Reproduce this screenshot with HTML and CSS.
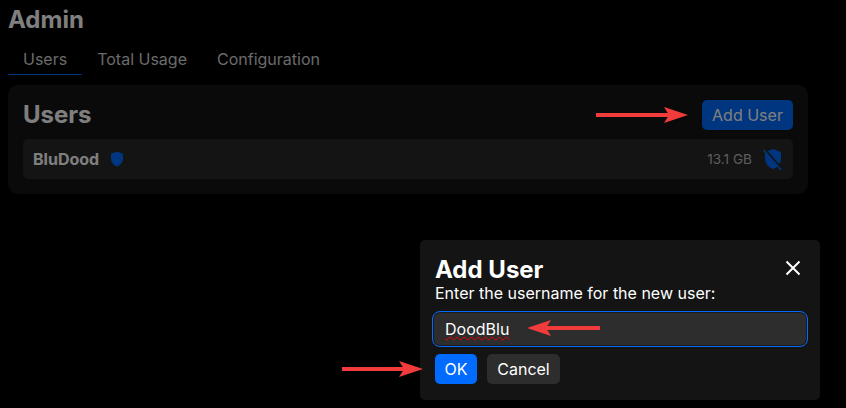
FILE: index.html
```html
<!DOCTYPE html>
<html lang="en">

<head>
    <meta charset="UTF-8">
    <meta name="viewport" content="width=device-width, initial-scale=1.0">
    <title>Admin</title>
    <link rel="stylesheet" href="styles.css">
</head>

<body>
    <!-- admin page -->
    <div class="page">
        <h1 class="page-title">Admin</h1>
        <div class="tabs">
            <div class="tab active">Users</div>
            <div class="tab">Total Usage</div>
            <div class="tab">Configuration</div>
        </div>
        <div class="card">
            <div class="card-head">
                <h2 class="card-title">Users</h2>
                <button class="add-btn" type="button">Add User</button>
            </div>
            <div class="user-row">
                <span class="user-name">BluDood</span>
                <svg class="shield" viewBox="0 0 24 24" width="18" height="18">
                    <path d="M12 2 L20 5 V11 C20 16.5 16.5 20.500 12 22 C7.500 20.500 4 16.500 4 11 V5 Z" />
                </svg>
                <span class="user-usage">13.1 GB</span>
                <svg class="shield-off" viewBox="0 0 24 24" width="24" height="24">
                    <path class="fill" d="M12 2 L20 5 V11 C20 16.500 16.500 20.500 12 22 C7.500 20.500 4 16.500 4 11 V5 Z" />
                    <path class="cut" d="M3.500 2 L21 22" />
                    <path class="slash" d="M2.500 3 L20 23" />
                </svg>
            </div>
        </div>
    </div>

    <!-- dims the page behind the dialog -->
    <div class="backdrop"></div>

    <!-- dialog -->
    <div class="modal">
        <div class="modal-head">
            <h2 class="modal-title">Add User</h2>
            <svg class="close" viewBox="0 0 16 16" width="16" height="16">
                <path d="M1.500 1.500 L14.500 14.500 M14.500 1.500 L1.500 14.500" />
            </svg>
        </div>
        <label class="modal-label" for="username">Enter the username for the new user:</label>
        <div class="input" id="username"><span class="typo">DoodBlu</span></div>
        <div class="modal-actions">
            <button class="ok-btn" type="button">OK</button>
            <button class="cancel-btn" type="button">Cancel</button>
        </div>
    </div>

    <!-- red arrows drawn over the screenshot -->
    <svg class="arrows" viewBox="0 0 846 408" width="846" height="408">
        <path d="M596 113 H670 V117 H596 Z" />
        <path d="M664 107 L688 115 L664 123 L669 115 Z" />
        <path d="M600 326 H545 V330 H600 Z" />
        <path d="M527 328 L551 320 L546 328 L551 336 Z" />
        <path d="M342 367 H405 V371 H342 Z" />
        <path d="M399 361 L423 369 L399 377 L404 369 Z" />
    </svg>
</body>

</html>
```

FILE: styles.css
```css
* {
    margin: 0;
    padding: 0;
    box-sizing: border-box;
}

html,
body {
    height: 100%;
    overflow: hidden;
}

body {
    font-family: Inter, "Liberation Sans", sans-serif;
    color: #fff;
    background-color: #000;
}

button {
    font-family: inherit;
    border: none;
}

.page {
    width: 816px;
    padding: 8px 8px 0;
}

.page-title {
    font-size: 24px;
    line-height: 24px;
    font-weight: 700;
}

.tabs {
    display: flex;
    margin-top: 7px;
}

.tab {
    padding: 11px 15px 5px;
    font-size: 16px;
    line-height: 19px;
    color: #d4d4d4;
    border-bottom: 1px solid transparent;
}

.active {
    border-bottom-color: #006cff;
}

.card {
    margin-top: 10px;
    padding: 15px;
    height: 109px;
    background-color: #141414;
    border-radius: 10px;
}

.card-head {
    display: flex;
    justify-content: space-between;
    align-items: center;
    height: 30px;
}

.card-title {
    font-size: 24px;
    line-height: 30px;
    font-weight: 700;
}

.add-btn {
    width: 91px;
    height: 30px;
    font-size: 16px;
    color: #fff;
    background-color: #006cff;
    border-radius: 5px;
}

.user-row {
    display: flex;
    align-items: center;
    height: 40px;
    margin-top: 9px;
    padding: 0 8px 0 10px;
    background-color: #282828;
    border-radius: 5px;
}

.user-name {
    font-size: 16px;
    font-weight: 700;
}

.shield {
    margin-left: 9px;
    fill: #006cff;
}

.user-usage {
    margin-left: auto;
    margin-right: 9px;
    font-size: 13.600px;
    color: #bbb;
}

.shield-off .fill {
    fill: #006cff;
}

.shield-off .cut {
    stroke: #282828;
    stroke-width: 2;
}

.shield-off .slash {
    stroke: #006cff;
    stroke-width: 1.500;
}

.backdrop {
    position: absolute;
    inset: 0;
    background-color: rgba(0, 0, 0, 0.5);
}

.modal {
    position: absolute;
    left: 420px;
    top: 240px;
    width: 400px;
    height: 160px;
    padding: 15px;
    background-color: #141414;
    border-radius: 5px;
}

.modal-head {
    display: flex;
    justify-content: space-between;
    align-items: center;
    height: 29px;
}

.modal-title {
    font-size: 24px;
    line-height: 29px;
    font-weight: 700;
}

.close {
    margin-right: 4px;
    margin-top: -4px;
    stroke: #fff;
    stroke-width: 2;
}

.modal-label {
    display: block;
    font-size: 16px;
    line-height: 19px;
}

.input {
    display: flex;
    align-items: center;
    height: 36px;
    margin-top: 8px;
    padding: 0 12px;
    margin-left: -3px;
    width: 376px;
    font-size: 16px;
    background-color: #2d2d2d;
    border: 1px solid #006cff;
    box-shadow: inset 0 0 0 1px #1a1a1a;
    border-radius: 8px;
}

.typo {
    text-decoration: underline wavy #e60000 1px;
    text-underline-offset: 1px;
}

.modal-actions {
    display: flex;
    gap: 10px;
    margin-top: 7px;
}

.ok-btn,
.cancel-btn {
    height: 30px;
    font-size: 16px;
    color: #fff;
    border-radius: 5px;
}

.ok-btn {
    width: 42px;
    background-color: #006cff;
}

.cancel-btn {
    width: 73px;
    background-color: #2d2d2d;
}

.arrows {
    position: absolute;
    left: 0;
    top: 0;
    fill: #f23b3b;
}
```
